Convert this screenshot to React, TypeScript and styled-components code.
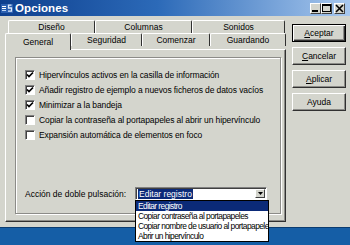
import { createGlobalStyle, styled } from 'styled-components';

const GlobalStyle = createGlobalStyle`
  html, body {
    margin: 0;
    padding: 0;
  }
  body {
    width: 350px;
    height: 245px;
    overflow: hidden;
    background: #155ea6;
    font-family: "Liberation Sans", Arial, sans-serif;
  }
`;

const TABS_BACK = [
  { label: 'Diseño', width: 87 },
  { label: 'Columnas', width: 97 },
  { label: 'Sonidos', width: 93 },
];

const TABS_FRONT = [
  { label: 'General', width: 66, active: true },
  { label: 'Seguridad', width: 71 },
  { label: 'Comenzar', width: 68 },
  { label: 'Guardando', width: 76 },
];

const OPTIONS = [
  { label: 'Hipervínculos activos en la casilla de información', checked: true },
  { label: 'Añadir registro de ejemplo a nuevos ficheros de datos vacíos', checked: true },
  { label: 'Minimizar a la bandeja', checked: true },
  { label: 'Copiar la contraseña al portapapeles al abrir un hipervínculo', checked: false },
  { label: 'Expansión automática de elementos en foco', checked: false },
];

const ACTIONS = [
  'Editar registro',
  'Copiar contraseña al portapapeles',
  'Copiar nombre de usuario al portapapeles',
  'Abrir un hipervínculo',
];

const App = () => {
  return (
    <Screen>
      <GlobalStyle />
      <Window>
        <TitleBar>
          <AppIcon width="12" height="12" viewBox="0 0 12 12">
            <rect x="0" y="2" width="12" height="9" fill="#2a5fb0" />
            <rect x="1" y="4" width="4" height="1" fill="#fff" />
            <rect x="1" y="6" width="4" height="1" fill="#fff" />
            <rect x="1" y="8" width="4" height="1" fill="#bcd4f4" />
            <path d="M10.5 3.2 H7.5 V6 H10.5 V9.2 H7" stroke="#dce9fa" strokeWidth="1.3" fill="none" />
          </AppIcon>
          <TitleText>Opciones</TitleText>
          <TitleControls>
            <TitleButton>
              <svg width="9" height="9" viewBox="0 0 9 9">
                <rect x="1" y="6" width="6" height="2" fill="#000" />
              </svg>
            </TitleButton>
            <TitleButton>
              <svg width="9" height="9" viewBox="0 0 9 9">
                <rect x="0.5" y="0.5" width="8" height="7" fill="none" stroke="#000" />
                <rect x="0.5" y="0.5" width="8" height="1.5" fill="#000" />
              </svg>
            </TitleButton>
            <TitleButton $gap>
              <svg width="9" height="9" viewBox="0 0 9 9">
                <path d="M1 1 L8 8 M8 1 L1 8" stroke="#000" strokeWidth="1.6" />
              </svg>
            </TitleButton>
          </TitleControls>
        </TitleBar>

        <Body>
          <TabArea>
            <TabRow $indent={3}>
              {TABS_BACK.map((tab) => (
                <Tab key={tab.label} $width={tab.width}>
                  {tab.label}
                </Tab>
              ))}
            </TabRow>
            <TabRow $indent={0}>
              {TABS_FRONT.map((tab) => (
                <Tab key={tab.label} $width={tab.width} $active={tab.active}>
                  {tab.label}
                </Tab>
              ))}
            </TabRow>
            <Panel>
              <GroupBox>
                <OptionList>
                  {OPTIONS.map((opt) => (
                    <OptionRow key={opt.label}>
                      <CheckBox>
                        {opt.checked && (
                          <svg width="8" height="8" viewBox="0 0 8 8">
                            <path d="M1 3.5 L3 5.5 L7 1.5" stroke="#000" strokeWidth="1.7" fill="none" />
                          </svg>
                        )}
                      </CheckBox>
                      <OptionLabel>{opt.label}</OptionLabel>
                    </OptionRow>
                  ))}
                </OptionList>

                <ComboRow>
                  <ComboLabel>Acción de doble pulsación:</ComboLabel>
                  <Combo>
                    <ComboValue>
                      <Selected>Editar registro</Selected>
                    </ComboValue>
                    <ComboArrow>
                      <svg width="5" height="3" viewBox="0 0 5 3">
                        <path d="M0 0 H5 L2.5 3 Z" fill="#000" />
                      </svg>
                    </ComboArrow>
                    <DropList>
                      {ACTIONS.map((action, i) => (
                        <DropItem key={action} $selected={i === 0}>
                          {action}
                        </DropItem>
                      ))}
                    </DropList>
                  </Combo>
                </ComboRow>
              </GroupBox>
            </Panel>
          </TabArea>

          <ButtonColumn>
            <DialogButton $default>
              <u>A</u>ceptar
            </DialogButton>
            <DialogButton>
              <u>C</u>ancelar
            </DialogButton>
            <DialogButton>
              <u>A</u>plicar
            </DialogButton>
            <DialogButton>Ayuda</DialogButton>
          </ButtonColumn>
        </Body>
      </Window>
    </Screen>
  );
};

const Screen = styled.div`
  width: 350px;
  height: 245px;
  display: flex;
  flex-direction: column;
  background: #155ea6;
  overflow: hidden;
`;

const Window = styled.div`
  height: 227px;
  flex: none;
  display: flex;
  flex-direction: column;
  background: #d4d5cd;
  border-bottom: 1px solid #0b3c70;
`;

const TitleBar = styled.div`
  height: 16px;
  display: flex;
  align-items: center;
  padding: 0 5px 0 1px;
  background: linear-gradient(90deg, #0d3f8e 0%, #2c6ab8 45%, #a8c8ee 100%);
`;

const AppIcon = styled.svg`
  flex: none;
`;

const TitleText = styled.span`
  margin-left: 2px;
  color: #fff;
  font-weight: bold;
  font-size: 11.5px;
  letter-spacing: 0.1px;
`;

const TitleControls = styled.div`
  margin-left: auto;
  display: flex;
`;

const TitleButton = styled.div<{ $gap?: boolean }>`
  width: 11px;
  height: 11px;
  margin-left: ${({ $gap }) => ($gap ? '2px' : '0')};
  box-sizing: border-box;
  display: flex;
  align-items: center;
  justify-content: center;
  background: #d4d5cd;
  border: 1px solid;
  border-color: #fff #404040 #404040 #fff;
`;

const Body = styled.div`
  display: flex;
  gap: 6px;
  padding: 4px 4px 0 5px;
`;

const TabArea = styled.div`
  width: 281px;
  display: flex;
  flex-direction: column;
`;

const TabRow = styled.div<{ $indent: number }>`
  display: flex;
  padding-left: ${({ $indent }) => $indent}px;
  position: relative;
`;

const Tab = styled.div<{ $width: number; $active?: boolean }>`
  width: ${({ $width }) => $width}px;
  height: ${({ $active }) => ($active ? 17 : 13)}px;
  margin-bottom: ${({ $active }) => ($active ? -1 : 0)}px;
  box-sizing: border-box;
  display: flex;
  align-items: center;
  justify-content: center;
  font-size: 8.5px;
  color: #000;
  background: #d4d5cd;
  border-top: 1px solid #fff;
  border-left: 1px solid #fff;
  border-right: 1px solid #303030;
  border-radius: 2px 2px 0 0;
  position: relative;
  z-index: ${({ $active }) => ($active ? 2 : 1)};

  ${TabRow}:last-of-type > & {
    height: ${({ $active }) => ($active ? 17 : 16)}px;
    padding-top: 1px;
  }
`;

const Panel = styled.div`
  height: 173px;
  box-sizing: border-box;
  border-top: 1px solid #fff;
  border-left: 1px solid #fff;
  border-right: 1px solid #303030;
  border-bottom: 1px solid #303030;
  box-shadow: inset -1px -1px #8c8c88;
  padding: 7px 4px 7px 9px;
  display: flex;
`;

const GroupBox = styled.div`
  flex: 1;
  box-sizing: border-box;
  border: 1px solid #8c8c88;
  box-shadow: inset 1px 1px #fff, 1px 1px #fff;
  padding: 9px 9px 0 9px;
  display: flex;
  flex-direction: column;
`;

const OptionList = styled.div`
  display: flex;
  flex-direction: column;
`;

const OptionRow = styled.div`
  height: 15px;
  display: flex;
  align-items: center;
  gap: 4px;
`;

const CheckBox = styled.div`
  width: 10px;
  height: 10px;
  box-sizing: border-box;
  flex: none;
  display: flex;
  align-items: center;
  justify-content: center;
  background: #fff;
  border: 1px solid;
  border-color: #808080 #fff #fff #808080;
  box-shadow: inset 1px 1px #404040;
`;

const OptionLabel = styled.span`
  font-size: 8.5px;
  letter-spacing: -0.1px;
  color: #000;
  white-space: nowrap;
`;

const ComboRow = styled.div`
  margin-top: 45px;
  display: flex;
  align-items: center;
`;

const ComboLabel = styled.span`
  width: 110px;
  flex: none;
  font-size: 8.5px;
  color: #000;
  white-space: nowrap;
`;

const Combo = styled.div`
  width: 132px;
  height: 13px;
  box-sizing: border-box;
  position: relative;
  display: flex;
  background: #fff;
  border: 1px solid;
  border-color: #808080 #fff #fff #808080;
  box-shadow: inset 1px 1px #404040;
`;

const ComboValue = styled.div`
  flex: 1;
  display: flex;
  align-items: center;
  padding-left: 2px;
`;

const Selected = styled.span`
  background: #0b2a78;
  color: #fff;
  font-size: 8.5px;
  line-height: 10px;
  padding: 0 1px;
`;

const ComboArrow = styled.div`
  width: 10px;
  flex: none;
  margin: 1px 1px 1px 0;
  box-sizing: border-box;
  display: flex;
  align-items: center;
  justify-content: center;
  background: #d4d5cd;
  border: 1px solid;
  border-color: #fff #404040 #404040 #fff;
`;

const DropList = styled.div`
  position: absolute;
  top: 12px;
  left: -1px;
  width: 134px;
  box-sizing: border-box;
  background: #fff;
  border: 1px solid #000;
  z-index: 5;
  overflow: hidden;
`;

const DropItem = styled.div<{ $selected?: boolean }>`
  height: 10px;
  line-height: 10px;
  padding-left: 2px;
  font-size: 8.4px;
  letter-spacing: -0.55px;
  white-space: nowrap;
  color: ${({ $selected }) => ($selected ? '#fff' : '#000')};
  background: ${({ $selected }) => ($selected ? '#0b2a78' : '#fff')};
`;

const ButtonColumn = styled.div`
  display: flex;
  flex-direction: column;
  gap: 5px;
  padding-top: 4px;
`;

const DialogButton = styled.div<{ $default?: boolean }>`
  width: 54px;
  height: 18px;
  box-sizing: border-box;
  display: flex;
  align-items: center;
  justify-content: center;
  font-size: 8.5px;
  color: #000;
  background: #d4d5cd;
  border: 1px solid;
  border-color: ${({ $default }) => ($default ? '#000' : '#fff #303030 #303030 #fff')};
  box-shadow: ${({ $default }) =>
    $default ? 'inset 1px 1px #fff, inset -1px -1px #303030, inset -2px -2px #8c8c88' : 'inset -1px -1px #8c8c88'};

  u {
    text-decoration-thickness: 1px;
    text-underline-offset: 1px;
  }
`;

export default App;
